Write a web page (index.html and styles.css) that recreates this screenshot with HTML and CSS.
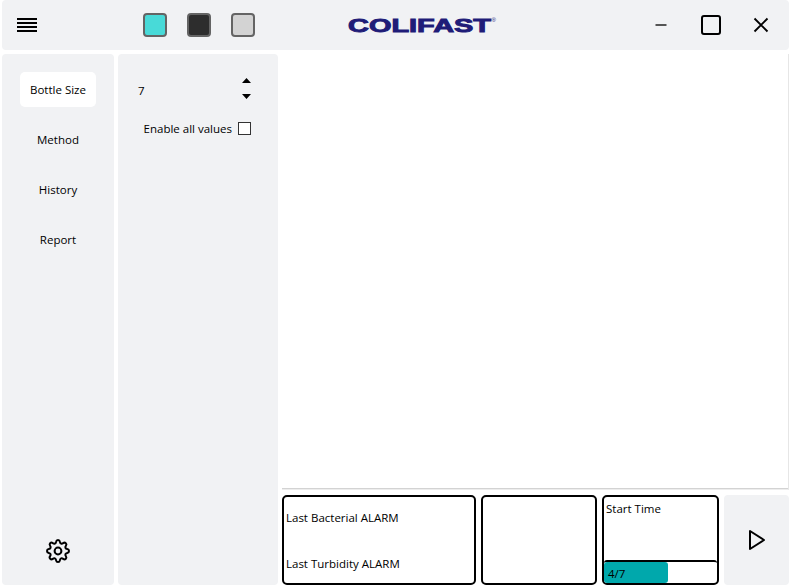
FILE: index.html
```html
<!DOCTYPE html>
<html lang="en">
<head>
<meta charset="utf-8">
<title>Colifast</title>
<link rel="stylesheet" href="styles.css">
</head>
<body>
<div class="app">
  <header class="topbar">
    <button class="icon-btn menu" aria-label="Menu">
      <svg width="20" height="14" viewBox="0 0 20 14"><path d="M0 1h20M0 5h20M0 9h20M0 13h20" stroke="#000" stroke-width="2"/></svg>
    </button>
    <div class="themes">
      <span class="swatch teal"></span>
      <span class="swatch dark"></span>
      <span class="swatch light"></span>
    </div>
    <svg class="logo" width="150" height="20" viewBox="0 0 150 20">
      <text class="brand" x="1" y="16.6" textLength="143" lengthAdjust="spacingAndGlyphs">COLIFAST</text>
      <text class="reg" x="144.5" y="7">®</text>
    </svg>
    <div class="window-controls">
      <button class="icon-btn" aria-label="Minimize"><svg width="22" height="22" viewBox="0 0 22 22"><path d="M5.5 11h11" stroke="#555" stroke-width="2"/></svg></button>
      <button class="icon-btn" aria-label="Maximize"><svg width="22" height="22" viewBox="0 0 22 22"><rect x="2" y="2" width="18" height="18" rx="2" fill="none" stroke="#000" stroke-width="2"/></svg></button>
      <button class="icon-btn" aria-label="Close"><svg width="22" height="22" viewBox="0 0 22 22"><path d="M4.5 4.5l13 13M17.5 4.5l-13 13" stroke="#000" stroke-width="1.9"/></svg></button>
    </div>
  </header>
  <main class="body">
    <nav class="sidebar">
      <a class="tab active">Bottle Size</a>
      <a class="tab">Method</a>
      <a class="tab">History</a>
      <a class="tab">Report</a>
      <button class="icon-btn settings" aria-label="Settings">
        <svg width="26" height="26" viewBox="-13 -13 26 26" fill="none" stroke="#000" stroke-width="2" stroke-linejoin="round">
          <circle r="3.4"/>
          <path d="M-1.9 -9.3Q-1.6 -11 0 -11T1.9 -9.3C2.3 -7.3 3.6 -6.8 5.2 -7.9Q6.6 -8.9 7.8 -7.8T7.9 -5.2C6.8 -3.6 7.3 -2.3 9.3 -1.9Q11 -1.6 11 0T9.3 1.9C7.3 2.3 6.8 3.6 7.9 5.2Q8.9 6.6 7.8 7.8T5.2 7.9C3.6 6.8 2.3 7.3 1.9 9.3Q1.6 11 0 11T-1.9 9.3C-2.3 7.3 -3.6 6.8 -5.2 7.9Q-6.6 8.9 -7.8 7.8T-7.9 5.2C-6.8 3.6 -7.3 2.3 -9.3 1.9Q-11 1.6 -11 0T-9.3 -1.9C-7.3 -2.3 -6.8 -3.6 -7.9 -5.2Q-8.9 -6.6 -7.8 -7.8T-5.2 -7.9C-3.6 -6.8 -2.3 -7.3 -1.9 -9.3Z"/>
        </svg>
      </button>
    </nav>
    <section class="options">
      <div class="spinner">
        <span>7</span>
        <svg width="9" height="21" viewBox="0 0 9 21"><path d="M0 5L4.5 0L9 5ZM0 16H9L4.5 21Z"/></svg>
      </div>
      <label class="check">Enable all values<span class="box"></span></label>
    </section>
    <section class="content">
      <div class="chart"></div>
      <div class="status">
        <div class="card alarms">
          <p>Last Bacterial ALARM</p>
          <p>Last Turbidity ALARM</p>
        </div>
        <div class="card"></div>
        <div class="card run">
          <p>Start Time</p>
          <div class="progress"><div class="fill">4/7</div></div>
        </div>
        <button class="icon-btn play" aria-label="Start">
          <svg width="20" height="22" viewBox="0 0 20 22"><path d="M3 2V20L17 11Z" fill="none" stroke="#000" stroke-width="2" stroke-linejoin="round"/></svg>
        </button>
      </div>
    </section>
  </main>
</div>
</body>
</html>
```
FILE: styles.css
```css
* { box-sizing: border-box; }
body {
  margin: 0;
  background: #fff;
  color: #000;
  font: 11.5px/16px "Open Sans", "Noto Sans", sans-serif;
  overflow: hidden;
}
p { margin: 0; }
.app {
  width: 789px;
  height: 588px;
  padding: 0 0 3px 2px;
  display: flex;
  flex-direction: column;
  gap: 4px;
}
.icon-btn {
  border: 0;
  padding: 0;
  background: none;
  display: flex;
  align-items: center;
  justify-content: center;
}
.topbar {
  height: 50px;
  flex: none;
  background: #f1f2f4;
  border-radius: 4px;
  display: flex;
  align-items: center;
}
.menu { width: 50px; height: 50px; }
.themes { display: flex; gap: 20px; margin-left: 91px; }
.swatch {
  width: 24px;
  height: 24px;
  border: 2px solid #646464;
  border-radius: 4px;
}
.teal { background: #48dad8; }
.dark { background: #2d2d2d; }
.light { background: #d3d3d3; }
.logo { margin-left: 92px; }
.brand {
  font: bold 18px "Liberation Sans", Arial, sans-serif;
  fill: #1f1c78;
  stroke: #1f1c78;
  stroke-width: .9px;
}
.reg { font: 6px "Liberation Sans", Arial, sans-serif; fill: #1f1c78; }
.window-controls { display: flex; margin-left: auto; margin-right: 3px; }
.window-controls .icon-btn { width: 50px; height: 50px; }
.body {
  flex: 1;
  min-height: 0;
  display: grid;
  grid-template-columns: 112px 160px 1fr;
  gap: 4px;
}
.sidebar, .options { background: #f1f2f4; border-radius: 4px; }
.sidebar {
  padding: 18px 18px 20px;
  display: flex;
  flex-direction: column;
  gap: 15px;
}
.tab {
  height: 35px;
  width: 76px;
  padding-top: 1px;
  border-radius: 5px;
  display: flex;
  align-items: center;
  justify-content: center;
  white-space: nowrap;
}
.active { background: #fff; }
.settings { margin-top: auto; height: 28px; }
.options { padding: 24px 27px 0 20px; }
.spinner { display: flex; justify-content: space-between; height: 22px; }
.spinner span { line-height: 25px; }
.check {
  margin-top: 20px;
  height: 17px;
  display: flex;
  align-items: center;
  justify-content: flex-end;
  gap: 6px;
  white-space: nowrap;
}
.box { width: 13px; height: 13px; border: 1px solid #333; background: #fff; }
.content { display: flex; flex-direction: column; gap: 5px; min-width: 0; }
.chart {
  flex: 1;
  border-right: 1px solid #e6e6e6;
  border-bottom: 1px solid #ededed;
  box-shadow: inset 0 -1px #d3d3d3;
}
.status {
  height: 90px;
  display: grid;
  grid-template-columns: 194px 116px 117px 65px;
  gap: 5px;
}
.card { border: 2px solid #000; border-radius: 5px; background: #fff; }
.alarms {
  padding: 13px 2px 11px;
  display: flex;
  flex-direction: column;
  justify-content: space-between;
}
.run {
  display: flex;
  flex-direction: column;
  justify-content: space-between;
}
.run p { padding: 4px 2px; }
.progress { height: 23px; border-top: 2px solid #000; border-radius: 3px; }
.fill {
  width: 64px;
  height: 21px;
  padding-left: 4px;
  line-height: 23px;
  border-radius: 3px;
  background: #00a8ac;
}
.play { background: #f1f2f4; border-radius: 4px; }
```
